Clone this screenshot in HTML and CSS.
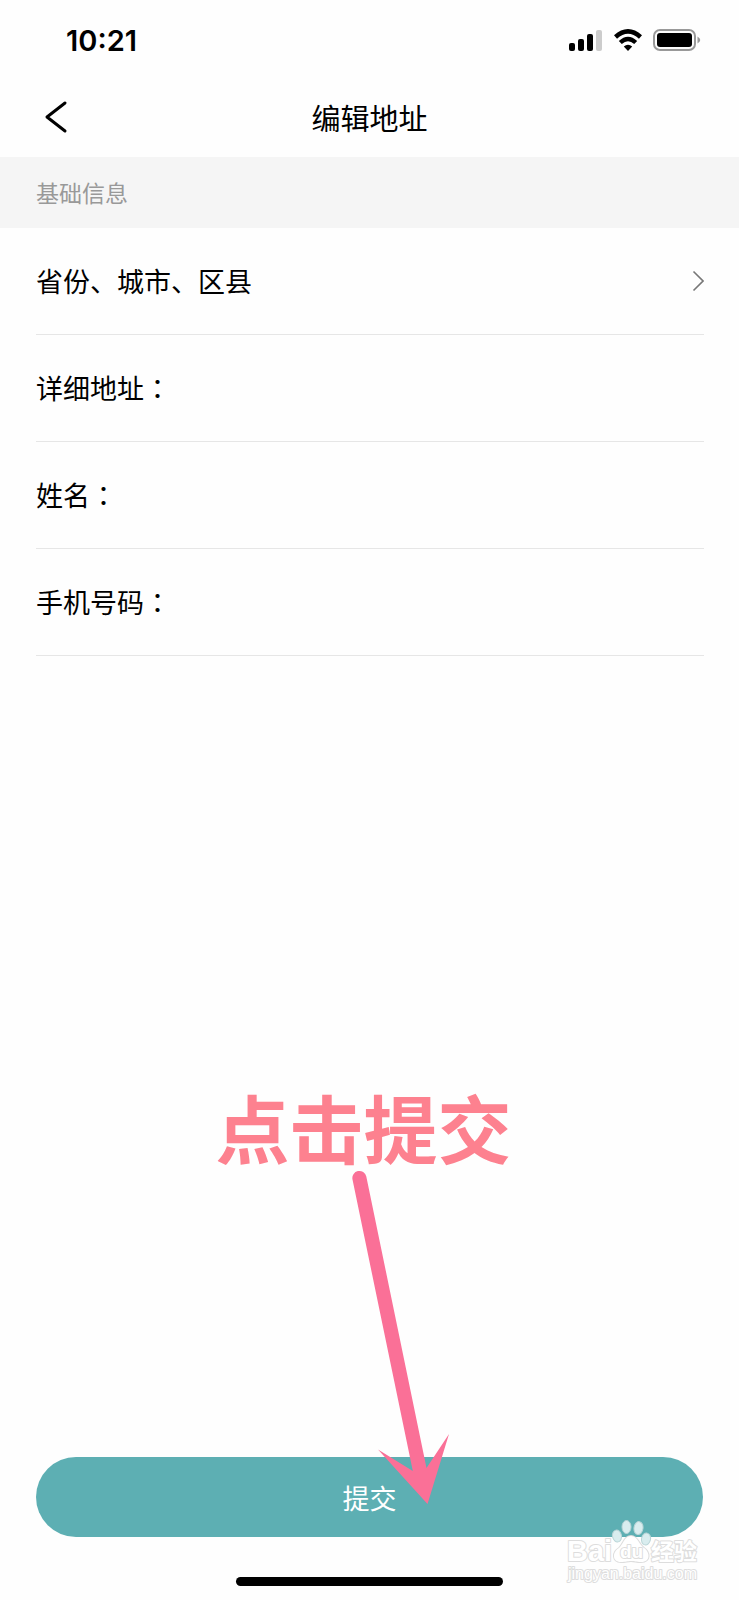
FILE: index.html
```html
<!DOCTYPE html>
<html lang="zh-CN">
<head>
<meta charset="utf-8">
<meta name="viewport" content="width=device-width, initial-scale=1">
<title>编辑地址</title>
<link rel="stylesheet" href="styles.css">
</head>
<body>
<div class="page">
  <div class="status">
    <span class="time">10:21</span>
    <div class="status-icons">
      <svg class="signal" viewBox="0 0 34 22" aria-hidden="true">
        <rect x="0" y="14" width="6" height="8" rx="2"/>
        <rect x="9" y="10" width="6" height="12" rx="2"/>
        <rect x="18" y="5" width="6" height="17" rx="2"/>
        <rect x="27" y="1" width="6" height="21" rx="2" fill="#ccc"/>
      </svg>
      <svg class="wifi" viewBox="0 0 28 22" aria-hidden="true">
        <path d="M1.500 8Q14-3.200 26.500 8" fill="none" stroke="#000" stroke-width="4.600"/>
        <path d="M6.300 13.500Q14 6.400 21.700 13.500" fill="none" stroke="#000" stroke-width="4.400"/>
        <path d="M9.800 17.400Q14 14 18.200 17.400L14 22Z"/>
      </svg>
      <svg class="battery" viewBox="0 0 48 22" aria-hidden="true">
        <rect x="1" y="1" width="41" height="20" rx="6" fill="none" stroke="#999" stroke-width="2"/>
        <rect x="4" y="4" width="35" height="14" rx="3"/>
        <path d="M44.500 7.500Q50 11 44.500 14.500Z" fill="#999"/>
      </svg>
    </div>
  </div>
  <header class="nav">
    <button class="back" type="button" aria-label="返回">
      <svg viewBox="0 0 24 34" aria-hidden="true"><path d="M21 3L3 17L21 31" fill="none" stroke="#000" stroke-width="3" stroke-linecap="round" stroke-linejoin="round"/></svg>
    </button>
    <h1 class="title">编辑地址</h1>
  </header>
  <form class="form">
    <h2 class="section">基础信息</h2>
    <div class="fields">
      <button class="row region" type="button">
        <span>省份、城市、区县</span>
        <svg class="chevron" viewBox="0 0 12 22" aria-hidden="true"><path d="M1.500 1.500L11 11L1.500 20.500" fill="none" stroke="#777" stroke-width="1.600"/></svg>
      </button>
      <div class="row">
        <label for="address">详细地址<span class="colon" lang="zh-TW">：</span></label>
        <input id="address" type="text">
      </div>
      <div class="row">
        <label for="name">姓名<span class="colon" lang="zh-TW">：</span></label>
        <input id="name" type="text">
      </div>
      <div class="row">
        <label for="phone">手机号码<span class="colon" lang="zh-TW">：</span></label>
        <input id="phone" type="tel">
      </div>
    </div>
    <button class="submit" type="submit">提交</button>
  </form>
  <div class="home-bar"></div>

  <div class="hint">
    <p class="hint-text">点击提交</p>
    <svg class="hint-arrow" viewBox="0 0 100 336" aria-hidden="true">
      <path d="M2.500 9.500A7 7 0 0 1 16.300 6.500L76.500 298L99 264L77.500 334L28 279.500L62.800 301Z" fill="#fa7097"/>
    </svg>
  </div>

  <svg class="watermark" viewBox="0 0 136 70" aria-hidden="true">
    <g class="wm-outline">
      <text class="wm-brand" x="1" y="41">Bai</text>
      <path d="M65 16C58 16 57 25 53 28C46 32 46 42 55 42C60 42 61 41 65 41C69 41 70 42 75 42C85 42 84 32 78 28C73 25 72 16 65 16Z"/>
      <text class="wm-du" x="54" y="38">du</text>
      <text class="wm-cn" x="85" y="40">经验</text>
      <text class="wm-url" x="2" y="59">jingyan.baidu.com</text>
    </g>
    <g fill="#d9edef" stroke="#b9d5d7" stroke-width="1">
      <ellipse cx="51" cy="16" rx="4.500" ry="6" transform="rotate(-12 51 16)"/>
      <ellipse cx="60.500" cy="7" rx="4.500" ry="6.500"/>
      <ellipse cx="72.500" cy="8" rx="4.500" ry="6.500" transform="rotate(8 72 8)"/>
      <ellipse cx="80" cy="19" rx="4.500" ry="6" transform="rotate(12 80 19)"/>
    </g>
  </svg>
</div>
</body>
</html>
```
FILE: styles.css
```css
* {
  box-sizing: border-box;
}

body {
  margin: 0;
  background: #fefefe;
  color: #000;
  font-family: "Noto Sans CJK SC", sans-serif;
}

button,
input {
  border: 0;
  padding: 0;
  background: none;
  color: inherit;
  font: inherit;
}

svg {
  display: block;
}

.page {
  position: relative;
  display: flex;
  flex-direction: column;
  min-height: 100vh;
}

.status {
  display: flex;
  align-items: center;
  justify-content: space-between;
  height: 80px;
  padding: 0 38px 0 66px;
}

.time {
  font: 600 29px/1 Inter, sans-serif;
}

.status-icons {
  display: flex;
  align-items: center;
  gap: 11px;
}

.signal {
  width: 34px;
  height: 22px;
}

.wifi {
  width: 28px;
  height: 22px;
}

.battery {
  width: 48px;
  height: 22px;
}

.nav {
  display: grid;
  grid-template-columns: 44px 1fr 44px;
  align-items: center;
  height: 77px;
  padding: 0 24px 4px;
}

.back {
  display: flex;
  justify-content: center;
  padding: 4px 0 4px 20px;
}

.back svg {
  width: 24px;
  height: 34px;
}

.title {
  margin: 0;
  font-size: 29px;
  font-weight: 400;
  line-height: 40px;
  text-align: center;
}

.form {
  display: flex;
  flex: 1;
  flex-direction: column;
}

.section {
  margin: 0;
  padding: 0 36px;
  background: #f5f5f5;
  color: #999;
  font-size: 23px;
  font-weight: 400;
  line-height: 71px;
}

.fields {
  display: flex;
  flex-direction: column;
  padding: 0 35px 0 36px;
  font-size: 27px;
  line-height: 40px;
}

.row {
  display: flex;
  align-items: center;
  height: 107px;
  border-bottom: 1px solid #e6e6e6;
}

.region {
  justify-content: space-between;
}

.row input {
  flex: 1;
  min-width: 0;
  outline: 0;
}

.colon {
  font-family: "Noto Sans CJK TC", sans-serif;
}

.chevron {
  width: 12px;
  height: 22px;
}

.submit {
  height: 80px;
  margin: auto 36px 0;
  border-radius: 40px;
  background: #5dafb3;
  color: #fff;
  font-size: 27px;
}

.home-bar {
  width: 36%;
  height: 9px;
  margin: 40px auto 14px;
  border-radius: 5px;
  background: #000;
}

.hint {
  position: absolute;
  right: 0;
  bottom: 94px;
  left: 0;
  display: flex;
  flex-direction: column;
  align-items: center;
  pointer-events: none;
}

.hint-text {
  margin: 0;
  padding: 0 12px 4px 0;
  color: #fd818f;
  font-size: 74px;
  font-weight: 700;
  line-height: 80px;
}

.hint-arrow {
  width: 100px;
  height: 336px;
  margin-left: 60px;
}

.watermark {
  position: absolute;
  right: 37px;
  bottom: 10px;
  width: 136px;
  height: 70px;
  overflow: visible;
  pointer-events: none;
}

.wm-outline {
  fill: #fff;
  stroke: #ddd;
  stroke-width: 2px;
  stroke-linejoin: round;
  paint-order: stroke;
}

.wm-brand {
  font: 700 29px "Liberation Sans", sans-serif;
}

.wm-du {
  font: 700 19px "Liberation Sans", sans-serif;
}

.wm-cn {
  font: 700 23px "Noto Sans CJK SC", sans-serif;
}

.wm-url {
  font: 400 16px "Liberation Sans", sans-serif;
}
```
